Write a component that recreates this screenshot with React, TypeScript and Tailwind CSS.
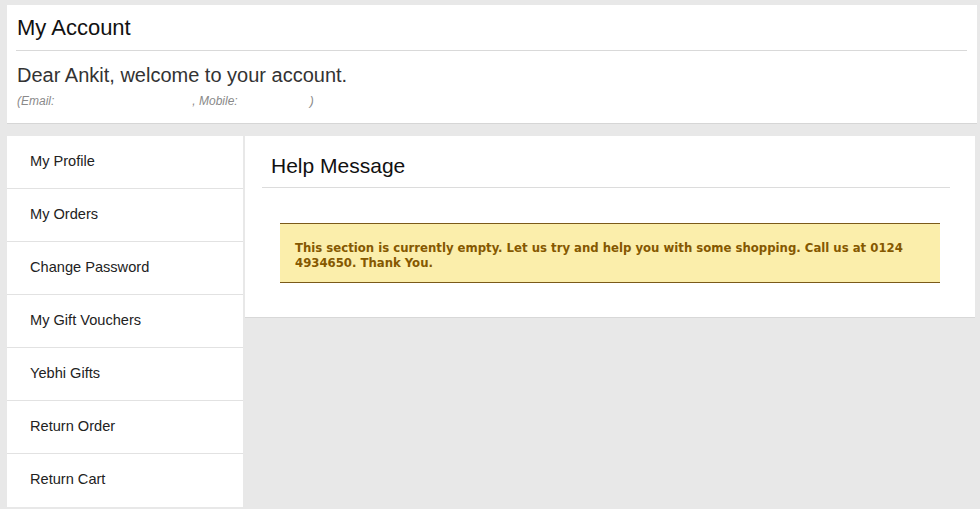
const menu = [
  "My Profile",
  "My Orders",
  "Change Password",
  "My Gift Vouchers",
  "Yebhi Gifts",
  "Return Order",
  "Return Cart",
];

export default function App() {
  return (
    <div className="w-[980px] h-[509px] overflow-hidden bg-[#e8e8e8] pt-[5px] pl-[7px] pr-[3px] font-['Liberation_Sans',Arial,sans-serif]">
      {/* header card */}
      <div className="h-[119px] bg-white border-b border-[#d6d6d6] pl-[9px] pr-[10px]">
        <div className="h-[46px] border-b border-[#d9d9d9] pl-[1px] pt-[10px]">
          <h1 className="text-[22px] leading-[26px] text-[#111]">My Account</h1>
        </div>
        <p className="mt-[12px] pl-[1px] text-[20px] leading-[24px] text-[#333]">
          Dear Ankit, welcome to your account.
        </p>
        <p className="mt-[7px] pl-[1px] text-[12px] leading-[14px] italic text-[#8a8a8a]">
          (Email:<span className="inline-block w-[138px]" />, Mobile:<span className="inline-block w-[72px]" />)
        </p>
      </div>

      <div className="mt-[12px] flex gap-[2px] items-start">
        {/* sidebar */}
        <ul className="w-[236px] bg-white">
          {menu.map((item, i) => (
            <li
              key={item}
              className={
                "h-[53px] flex items-center pl-[23px] text-[14.6px] text-[#222] " +
                (i < menu.length - 1 ? "border-b border-[#e2e2e2] pb-[1px]" : "pb-[1px]")
              }
            >
              {item}
            </li>
          ))}
        </ul>

        {/* content */}
        <div className="w-[730px] h-[182px] bg-white border-b border-[#d8d8d8] pt-[17px]">
          <div className="mx-[17px] mr-[25px] h-[35px] border-b border-[#dcdcdc] pl-[9px]">
            <h2 className="text-[21px] leading-[26px] text-[#111]">Help Message</h2>
          </div>
          <div className="mt-[35px] mx-[35px] h-[60px] bg-[#fbeeab] border-y border-[#7a5a1a] px-[15px] pt-[16px]">
            <p className="text-[13px] leading-[15px] font-bold text-[#855800] font-['DejaVu_Sans_Condensed','DejaVu_Sans',sans-serif]">
              This section is currently empty. Let us try and help you with some shopping. Call us at 0124 4934650. Thank You.
            </p>
          </div>
        </div>
      </div>
    </div>
  );
}
